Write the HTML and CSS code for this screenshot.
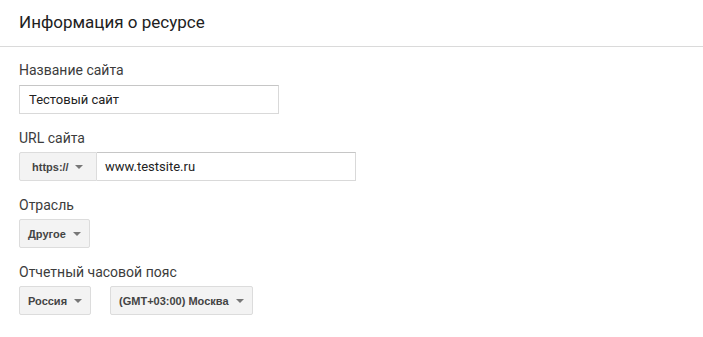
FILE: index.html
```html
<!DOCTYPE html>
<html lang="ru">
<head>
<meta charset="utf-8">
<link rel="stylesheet" href="styles.css">
</head>
<body>
<div class="header"><h1 class="title">Информация о ресурсе</h1></div>
<div class="form">
  <div class="field f1">
    <div class="label">Название сайта</div>
    <div class="input w260">Тестовый сайт</div>
  </div>
  <div class="field">
    <div class="label">URL сайта</div>
    <div class="row">
      <div class="btn btn-proto">https://<span class="arrow"></span></div>
      <div class="input url">www.testsite.ru</div>
    </div>
  </div>
  <div class="field">
    <div class="label">Отрасль</div>
    <div class="row"><div class="btn">Другое<span class="arrow"></span></div></div>
  </div>
  <div class="field">
    <div class="label">Отчетный часовой пояс</div>
    <div class="row gap">
      <div class="btn">Россия<span class="arrow"></span></div>
      <div class="btn">(GMT+03:00) Москва<span class="arrow"></span></div>
    </div>
  </div>
</div>
</body>
</html>
```
FILE: styles.css
```css
html, body { margin: 0; padding: 0; background: #fff; }
body { font-family: Roboto, "Noto Sans", sans-serif; color: #333; width: 703px; height: 337px; overflow: hidden; }
.header { height: 47px; box-sizing: border-box; padding: 12px 0 0 19px; border-bottom: 1px solid #dadada; }
.title { margin: 0; font-size: 17px; line-height: 20px; font-weight: 400; color: #212121; }
.form { padding: 13px 0 0 19px; }
.field { margin-top: 14px; }
.field.f1 { margin-top: 0; }
.label { font-size: 14px; line-height: 20px; color: #3c3c3c; }
.f1 .input { margin-top: 5px; }
.row { display: flex; align-items: stretch; margin-top: 4px; }
.row.gap { gap: 19px; }
.input { box-sizing: border-box; height: 29px; border: 1px solid #d9d9d9; border-top-color: #c6c6c6; font-size: 13px; line-height: 27px; padding-left: 9px; color: #222; }
.w260 { width: 260px; }
.url { width: 259px; border-left: none; padding-left: 8px; }
.btn { box-sizing: border-box; height: 29px; display: flex; align-items: center; gap: 7px; padding: 0 8px 0 8px; background: #f3f3f3; border: 1px solid #dcdcdc; border-radius: 2px; font-family: "Liberation Sans", Arial, sans-serif; font-size: 11px; font-weight: 700; color: #444; }
.btn-proto { padding: 0 0 0 12px; gap: 6px; border-radius: 2px 0 0 2px; width: 78px; }
.arrow { width: 0; height: 0; border-left: 4px solid transparent; border-right: 4px solid transparent; border-top: 4px solid #777; }
```
